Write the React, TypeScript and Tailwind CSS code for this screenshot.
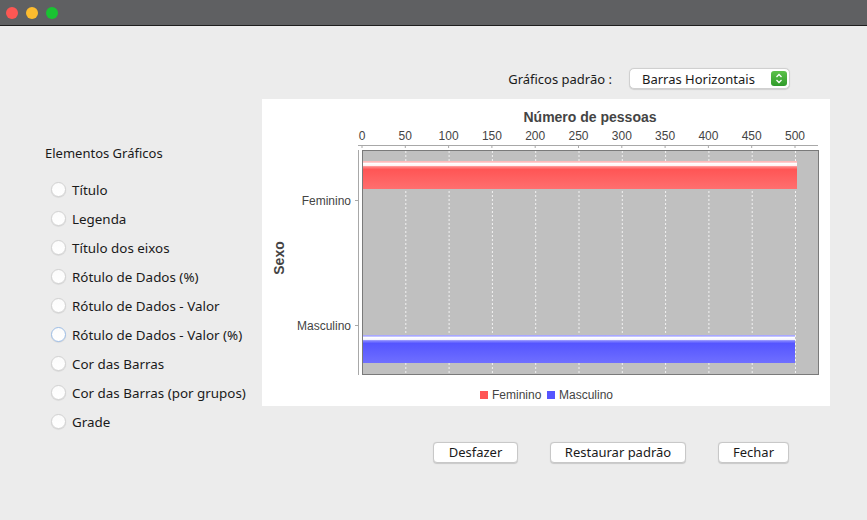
import React from "react";

const OPTIONS = [
  "Título",
  "Legenda",
  "Título dos eixos",
  "Rótulo de Dados (%)",
  "Rótulo de Dados - Valor",
  "Rótulo de Dados - Valor (%)",
  "Cor das Barras",
  "Cor das Barras (por grupos)",
  "Grade",
];

const TICKS = [0, 50, 100, 150, 200, 250, 300, 350, 400, 450, 500];
const X0 = 100;
const SCALE = 0.866;

function Radio({ label, focused }: { label: string; focused?: boolean }) {
  return (
    <div className="flex h-[29px] items-center">
      <span
        className={`ml-[6px] h-[15px] w-[15px] rounded-full border bg-gradient-to-b from-[#fbfbfb] to-[#ffffff] shadow-[0_0.5px_1px_rgba(0,0,0,0.15)] ${
          focused ? "border-[#9cbde6]" : "border-[#d2d2d2]"
        }`}
      />
      <span className="ml-[6px] text-[13.4px] leading-[16px] text-[#1a1a1a]">{label}</span>
    </div>
  );
}

function Chart() {
  return (
    <svg
      width={568}
      height={307}
      className="font-['Liberation_Sans',sans-serif]"
    >
      <defs>
        <linearGradient id="red" x1="0" y1="0" x2="0" y2="1">
          <stop offset="0" stopColor="#ffb0b0" />
          <stop offset="0.06" stopColor="#ffd0d0" />
          <stop offset="0.08" stopColor="#ffffff" />
          <stop offset="0.17" stopColor="#fff0f0" />
          <stop offset="0.2" stopColor="#ff8888" />
          <stop offset="0.3" stopColor="#ff5555" />
          <stop offset="1" stopColor="#ff6f6f" />
        </linearGradient>
        <linearGradient id="blue" x1="0" y1="0" x2="0" y2="1">
          <stop offset="0" stopColor="#9a9aff" />
          <stop offset="0.06" stopColor="#c8c8ff" />
          <stop offset="0.08" stopColor="#ffffff" />
          <stop offset="0.17" stopColor="#f0f0ff" />
          <stop offset="0.2" stopColor="#8888ff" />
          <stop offset="0.3" stopColor="#5555ff" />
          <stop offset="1" stopColor="#6f6fff" />
        </linearGradient>
      </defs>

      {/* titulo do eixo */}
      <text
        x={328}
        y={23}
        textAnchor="middle"
        fontSize={14}
        fontWeight="bold"
        fill="#444"
      >
        Número de pessoas
      </text>

      {/* eixo de valores */}
      <line x1={96} y1={46.5} x2={556} y2={46.5} stroke="#a8a8a8" />
      {TICKS.map((t) => {
        const x = X0 + t * SCALE;
        return (
          <g key={t}>
            <line x1={x} y1={46} x2={x} y2={49} stroke="#a8a8a8" />
            <text x={x} y={41} textAnchor="middle" fontSize={12} fill="#444">
              {t}
            </text>
          </g>
        );
      })}

      {/* area do grafico */}
      <rect x={100.5} y={51.5} width={456} height={224} fill="#c0c0c0" stroke="#7a7a7a" />
      {TICKS.slice(1).map((t) => {
        const x = X0 + t * SCALE + 0.5;
        return (
          <line
            key={t}
            x1={x}
            y1={52}
            x2={x}
            y2={275}
            stroke="#ffffff"
            strokeOpacity={0.8}
            strokeDasharray="2 2"
          />
        );
      })}
      <rect x={101} y={62} width={434} height={28} fill="url(#red)" />
      <rect x={101} y={236} width={432} height={28} fill="url(#blue)" />

      {/* eixo de categorias */}
      <line x1={96.5} y1={51} x2={96.5} y2={276} stroke="#a8a8a8" />
      <line x1={93} y1={101.5} x2={96} y2={101.5} stroke="#a8a8a8" />
      <line x1={93} y1={226.5} x2={96} y2={226.5} stroke="#a8a8a8" />
      <text x={89} y={106} textAnchor="end" fontSize={12} fill="#444">
        Feminino
      </text>
      <text x={89} y={231} textAnchor="end" fontSize={12} fill="#444">
        Masculino
      </text>
      <text
        x={0}
        y={0}
        transform="translate(21.5 159) rotate(-90)"
        textAnchor="middle"
        fontSize={14}
        fontWeight="bold"
        fill="#444"
      >
        Sexo
      </text>

      {/* legenda */}
      <rect x={218} y={292} width={8} height={8} fill="#ff5555" />
      <text x={230} y={300} fontSize={12} fill="#444">
        Feminino
      </text>
      <rect x={285} y={292} width={8} height={8} fill="#5555ff" />
      <text x={297} y={300} fontSize={12} fill="#444">
        Masculino
      </text>
    </svg>
  );
}

function Button({ label, width }: { label: string; width: string }) {
  return (
    <button
      className={`${width} h-[21px] rounded-[4px] border border-[#c8c8c8] bg-white text-[13px] leading-none text-[#1a1a1a] shadow-[0_0.5px_1px_rgba(0,0,0,0.15)]`}
    >
      {label}
    </button>
  );
}

export default function App() {
  return (
    <div className="flex h-[520px] w-[867px] flex-col overflow-hidden bg-[#ececec] font-['Noto_Sans',sans-serif]">
      {/* barra de titulo */}
      <div className="flex h-[26px] items-center gap-[8px] border-b border-[#1e1e1e] bg-[#5f6062] pl-[6px]">
        <span className="h-[12px] w-[12px] rounded-full bg-[#fc5753]" />
        <span className="h-[12px] w-[12px] rounded-full bg-[#fdbc2e]" />
        <span className="h-[12px] w-[12px] rounded-full bg-[#19c332]" />
      </div>

      {/* seletor */}
      <div className="mt-[42px] flex items-center justify-end gap-[17px] pr-[77px]">
        <span className="text-[13px] leading-[16px] text-[#1a1a1a]">Gráficos padrão :</span>
        <div className="flex h-[21px] w-[161px] items-center justify-between rounded-[5px] border border-[#d0d0d0] bg-white pl-[12px] pr-[2px] shadow-[0_0.5px_1px_rgba(0,0,0,0.12)]">
          <span className="text-[13px] leading-[16px] text-[#1a1a1a]">Barras Horizontais</span>
          <span className="flex h-[15px] w-[16px] flex-col items-center justify-center rounded-[3px] bg-gradient-to-b from-[#5cc24a] to-[#2f9b2a]">
            <svg width="8" height="11" viewBox="0 0 8 11">
              <path d="M1.5 4 L4 1.5 L6.5 4" fill="none" stroke="white" strokeWidth="1.3" />
              <path d="M1.5 7 L4 9.5 L6.5 7" fill="none" stroke="white" strokeWidth="1.3" />
            </svg>
          </span>
        </div>
      </div>

      {/* conteudo */}
      <div className="mt-[10px] flex items-start">
        <div className="w-[262px] pl-[45px]">
          <div className="mt-[46px] text-[13px] leading-[16px] text-[#1a1a1a]">
            Elementos Gráficos
          </div>
          <div className="mt-[14px] flex flex-col">
            {OPTIONS.map((o, i) => (
              <Radio key={o} label={o} focused={i === 5} />
            ))}
          </div>
        </div>
        <div className="flex w-[568px] flex-col">
          <div className="h-[307px] bg-white">
            <Chart />
          </div>
          {/* botoes */}
          <div className="mt-[36px] flex justify-end gap-[32px] pr-[41px]">
            <Button label="Desfazer" width="w-[85px]" />
            <Button label="Restaurar padrão" width="w-[136px]" />
            <Button label="Fechar" width="w-[71px]" />
          </div>
        </div>
      </div>
    </div>
  );
}
